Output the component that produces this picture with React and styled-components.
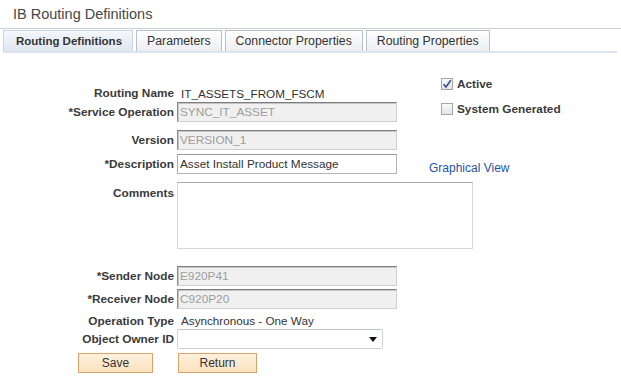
import React from "react";
import styled, { createGlobalStyle } from "styled-components";

const Global = createGlobalStyle`
  html, body { margin: 0; padding: 0; background: #fff; }
  body { font-family: "Liberation Sans", Arial, sans-serif; color: #333; }
  * { box-sizing: border-box; }
`;

const Page = styled.div`
  width: 621px;
  height: 382px;
  overflow: hidden;
`;

const TitleBar = styled.div`
  height: 29px;
  padding: 5px 0 0 13px;
  border-bottom: 1px solid #c9cfd8;
  font-size: 14.5px;
  color: #474747;
  line-height: 18px;
`;

const TabBar = styled.div`
  display: flex;
  gap: 3px;
  padding: 1px 0 0 3px;
  height: 22px;
  align-items: flex-end;
`;

const Tab = styled.div`
  height: 21px;
  padding: ${(p) => (p.$active ? "0 10px 0 12px" : "0 10px")};
  display: flex;
  align-items: center;
  font-size: ${(p) => (p.$active ? "11.5px" : "12.3px")};
  font-weight: ${(p) => (p.$active ? "bold" : "normal")};
  color: #333;
  white-space: nowrap;
  border: 1px solid ${(p) => (p.$active ? "#cbd4df" : "#b7bfca")};
  border-bottom: none;
  background: ${(p) =>
    p.$active
      ? "linear-gradient(#f4f7fb, #dfe7f1)"
      : "linear-gradient(#ffffff, #eceef1)"};
`;

const TabStrip = styled.div`
  height: 2px;
  margin: 0 4px 0 3px;
  background: #dbe5f1;
`;

const Body = styled.div`
  display: flex;
`;

const FormCol = styled.div`
  width: 429px;
  flex: none;
  padding-top: 31px;
  display: flex;
  flex-direction: column;
`;

const Row = styled.div`
  display: flex;
  align-items: ${(p) => (p.$top ? "flex-start" : "center")};
  gap: 3px;
  height: ${(p) => p.$h || 20}px;
  margin-top: ${(p) => p.$mt || 0}px;
`;

const Label = styled.div`
  width: 174px;
  flex: none;
  text-align: right;
  font-size: 11.8px;
  font-weight: bold;
  color: #3a3a3a;
  padding-top: ${(p) => (p.$top ? "4px" : "0")};
  white-space: nowrap;
`;

const Value = styled.div`
  font-size: 11.7px;
  padding-left: 4px;
  color: #333;
  white-space: nowrap;
`;

const Input = styled.div`
  width: ${(p) => p.$w || 220}px;
  height: 20px;
  flex: none;
  display: flex;
  align-items: center;
  padding-left: 2px;
  font-size: 11.8px;
  white-space: nowrap;
  color: ${(p) => (p.$disabled ? "#9d9d9d" : "#333")};
  background: ${(p) => (p.$disabled ? "#f0f0f0" : "#fff")};
  border: 1px solid ${(p) => (p.$disabled ? "#d0d0d0" : "#b5b5b5")};
  border-top-color: ${(p) => (p.$disabled ? "#7e7e7e" : "#9a9a9a")};
  border-left-color: ${(p) => (p.$disabled ? "#8e8e8e" : "#a8a8a8")};
  ${(p) => (p.$disabled ? "box-shadow: inset 1px 1px 0 #c4c4c4;" : "")}
`;

const TextArea = styled.div`
  width: 296px;
  height: 67px;
  flex: none;
  background: #fff;
  border: 1px solid #d4d6dc;
  border-top-color: #a9a9a9;
`;

const Select = styled.div`
  width: 206px;
  height: 20px;
  flex: none;
  display: flex;
  align-items: center;
  justify-content: flex-end;
  padding-right: 5px;
  background: #fff;
  border: 1px solid #cfd2d6;
  border-top-color: #bfc2c6;
  border-radius: 2px;
`;

const ButtonRow = styled.div`
  display: flex;
  gap: 25px;
  padding-left: 78px;
  margin-top: 4px;
`;

const Button = styled.div`
  width: ${(p) => p.$w}px;
  height: 20px;
  display: flex;
  align-items: center;
  justify-content: center;
  font-size: 12px;
  color: #333;
  border: 1px solid #dba36a;
  background: linear-gradient(#fdf0dc, #fbe3c0);
`;

const SideCol = styled.div`
  display: flex;
  flex-direction: column;
  padding-top: 25px;
`;

const CheckRow = styled.div`
  display: flex;
  align-items: center;
  gap: 4px;
  height: 12px;
  margin: ${(p) => p.$mt || 0}px 0 0 12px;
  font-size: 11.8px;
  font-weight: bold;
  color: #3a3a3a;
  white-space: nowrap;
`;

const Box = styled.div`
  width: 12px;
  height: 12px;
  flex: none;
  border: 1px solid #a3a6ab;
  background: linear-gradient(#f9f9f9, #e4e5e7);
  display: flex;
  align-items: center;
  justify-content: center;
`;

const Link = styled.a`
  margin-top: 46px;
  font-size: 12px;
  color: #1f56a3;
  text-decoration: none;
  line-height: 14px;
  white-space: nowrap;
`;

export default function App() {
  return (
    <Page>
      <Global />
      <TitleBar>IB Routing Definitions</TitleBar>
      <TabBar>
        <Tab $active>Routing Definitions</Tab>
        <Tab>Parameters</Tab>
        <Tab>Connector Properties</Tab>
        <Tab>Routing Properties</Tab>
      </TabBar>
      <TabStrip />
      <Body>
        <FormCol>
          <Row $h={18}>
            <Label>Routing Name</Label>
            <Value>IT_ASSETS_FROM_FSCM</Value>
          </Row>
          <Row>
            <Label>*Service Operation</Label>
            <Input $disabled>SYNC_IT_ASSET</Input>
          </Row>
          <Row $mt={8}>
            <Label>Version</Label>
            <Input $disabled>VERSION_1</Input>
          </Row>
          <Row $mt={4}>
            <Label>*Description</Label>
            <Input>Asset Install Product Message</Input>
          </Row>
          <Row $mt={8} $h={67} $top>
            <Label $top>Comments</Label>
            <TextArea />
          </Row>
          <Row $mt={17}>
            <Label>*Sender Node</Label>
            <Input $disabled>E920P41</Input>
          </Row>
          <Row $mt={3}>
            <Label>*Receiver Node</Label>
            <Input $disabled>C920P20</Input>
          </Row>
          <Row $mt={3} $h={17}>
            <Label>Operation Type</Label>
            <Value>Asynchronous - One Way</Value>
          </Row>
          <Row>
            <Label>Object Owner ID</Label>
            <Select>
              <svg width="8" height="5" viewBox="0 0 8 5">
                <path d="M0 0 H8 L4 5 Z" fill="#111" />
              </svg>
            </Select>
          </Row>
          <ButtonRow>
            <Button $w={75}>Save</Button>
            <Button $w={79}>Return</Button>
          </ButtonRow>
        </FormCol>
        <SideCol>
          <CheckRow>
            <Box>
              <svg width="10" height="10" viewBox="0 0 10 10">
                <path
                  d="M1.5 5.2 L4 8 L8.8 1.2"
                  fill="none"
                  stroke="#3e4f8e"
                  strokeWidth="1.7"
                />
              </svg>
            </Box>
            Active
          </CheckRow>
          <CheckRow $mt={13}>
            <Box />
            System Generated
          </CheckRow>
          <Link href="#">Graphical View</Link>
        </SideCol>
      </Body>
    </Page>
  );
}
